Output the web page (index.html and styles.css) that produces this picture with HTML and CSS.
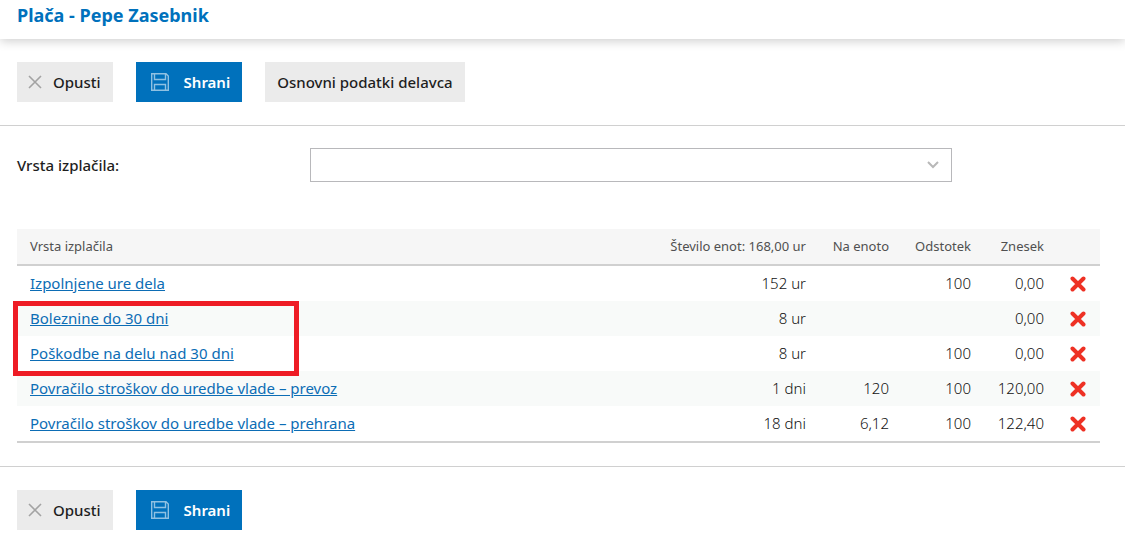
FILE: index.html
```html
<!DOCTYPE html>
<html lang="sl">
<head>
  <meta charset="UTF-8">
  <meta name="viewport" content="width=device-width, initial-scale=1.0">
  <title>Plača - Pepe Zasebnik</title>
  <link rel="stylesheet" href="styles.css">
</head>
<body>
  <!-- Shared icons -->
  <svg class="sprite" aria-hidden="true">
    <symbol id="icon-close" viewBox="0 0 14 14">
      <path d="M1 1l12 12M13 1L1 13" fill="none" stroke="currentColor" stroke-width="1.6"/>
    </symbol>
    <symbol id="icon-save" viewBox="0 0 18 18">
      <path d="M.7 .7H15L17.300 3V17.300H.7ZM3.500 .7V6.500H14.500V.7M3.500 17.300V11.500H14.500V17.300" fill="none" stroke="currentColor" stroke-width="1.400"/>
    </symbol>
    <symbol id="icon-delete" viewBox="0 0 16 16">
      <path d="M2.500 2.500l11 11M13.500 2.500l-11 11" fill="none" stroke="currentColor" stroke-width="4" stroke-linecap="round"/>
    </symbol>
  </svg>

  <header class="header">
    <h1>Plača - Pepe Zasebnik</h1>
  </header>

  <form class="form">
    <div class="toolbar">
      <button type="button" class="btn btn-cancel"><svg class="icon-close"><use href="#icon-close"/></svg>Opusti</button>
      <button type="submit" class="btn btn-primary"><svg class="icon-save"><use href="#icon-save"/></svg>Shrani</button>
      <button type="button" class="btn">Osnovni podatki delavca</button>
    </div>

    <main class="content">
      <div class="field">
        <label for="paymentType">Vrsta izplačila:</label>
        <div class="select">
          <select id="paymentType">
            <option value=""></option>
          </select>
          <svg class="arrow" viewBox="0 0 12 8" aria-hidden="true"><path d="M1 1l5 5 5-5" fill="none" stroke="currentColor" stroke-width="2"/></svg>
        </div>
      </div>

      <div class="table-wrap">
        <table>
          <thead>
            <tr>
              <th class="col-type">Vrsta izplačila</th>
              <th class="col-units">Število enot: 168,00 ur</th>
              <th class="col-rate">Na enoto</th>
              <th class="col-percent">Odstotek</th>
              <th class="col-amount">Znesek</th>
              <td class="col-delete"></td>
            </tr>
          </thead>
          <tbody>
            <tr>
              <td><a href="#">Izpolnjene ure dela</a></td>
              <td>152 ur</td>
              <td></td>
              <td>100</td>
              <td>0,00</td>
              <td><button type="button" class="delete" aria-label="Izbriši"><svg><use href="#icon-delete"/></svg></button></td>
            </tr>
            <tr>
              <td><a href="#">Boleznine do 30 dni</a></td>
              <td>8 ur</td>
              <td></td>
              <td></td>
              <td>0,00</td>
              <td><button type="button" class="delete" aria-label="Izbriši"><svg><use href="#icon-delete"/></svg></button></td>
            </tr>
            <tr>
              <td><a href="#">Poškodbe na delu nad 30 dni</a></td>
              <td>8 ur</td>
              <td></td>
              <td>100</td>
              <td>0,00</td>
              <td><button type="button" class="delete" aria-label="Izbriši"><svg><use href="#icon-delete"/></svg></button></td>
            </tr>
            <tr>
              <td><a href="#">Povračilo stroškov do uredbe vlade – prevoz</a></td>
              <td>1 dni</td>
              <td>120</td>
              <td>100</td>
              <td>120,00</td>
              <td><button type="button" class="delete" aria-label="Izbriši"><svg><use href="#icon-delete"/></svg></button></td>
            </tr>
            <tr>
              <td><a href="#">Povračilo stroškov do uredbe vlade – prehrana</a></td>
              <td>18 dni</td>
              <td>6,12</td>
              <td>100</td>
              <td>122,40</td>
              <td><button type="button" class="delete" aria-label="Izbriši"><svg><use href="#icon-delete"/></svg></button></td>
            </tr>
          </tbody>
        </table>
        <!-- Red frame around the sick leave rows -->
        <div class="highlight"></div>
      </div>
    </main>

    <div class="toolbar toolbar-bottom">
      <button type="button" class="btn btn-cancel"><svg class="icon-close"><use href="#icon-close"/></svg>Opusti</button>
      <button type="submit" class="btn btn-primary"><svg class="icon-save"><use href="#icon-save"/></svg>Shrani</button>
    </div>
  </form>
</body>
</html>
```
FILE: styles.css
```css
* {
  margin: 0;
  padding: 0;
  box-sizing: border-box;
}

body {
  font-family: 'Noto Sans', sans-serif;
  font-size: 15px;
  line-height: 20px;
  color: #1e1e1e;
  background: #ffffff;
  padding-right: 17px;
}

.sprite {
  display: none;
}

.header {
  height: 39px;
  padding: 5px 17px;
  box-shadow: 0 2px 10px rgba(0, 0, 0, 0.2);
  clip-path: inset(0 0 -14px 0);
}

h1 {
  font-size: 18px;
  line-height: 20px;
  font-weight: 700;
  color: #0071bc;
}

.toolbar {
  display: flex;
  flex-wrap: wrap;
  gap: 23px;
  padding: 23px 17px;
  border-bottom: 1px solid #d0d0d0;
}

.toolbar-bottom {
  border-top: 1px solid #d0d0d0;
  border-bottom: none;
}

.btn {
  display: flex;
  align-items: center;
  height: 40px;
  padding: 0 12px;
  border: none;
  background: #ebebeb;
  color: #1e1e1e;
  font: inherit;
  font-weight: 500;
  cursor: pointer;
}

.btn-cancel {
  padding-left: 11px;
}

.btn-primary {
  padding-left: 15px;
  background: #0071bc;
  color: #ffffff;
  font-weight: 600;
}

.icon-close {
  width: 14px;
  height: 14px;
  margin-right: 11px;
  color: #a3a3a3;
}

.icon-save {
  width: 18px;
  height: 18px;
  margin-right: 15px;
  color: #8fc1e2;
}

.content {
  padding: 22px 25px 23px 17px;
}

.field {
  display: flex;
  align-items: center;
  margin-bottom: 47px;
}

.field label {
  width: 293px;
  font-weight: 500;
}

.select {
  position: relative;
  width: 642px;
}

.select select {
  display: block;
  width: 100%;
  height: 34px;
  padding: 0 40px 0 12px;
  border: 1px solid #b8b8bb;
  background: #ffffff;
  font: inherit;
  appearance: none;
}

.arrow {
  position: absolute;
  top: 13px;
  right: 13px;
  width: 12px;
  height: 8px;
  color: #b8b8b8;
  pointer-events: none;
}

.table-wrap {
  position: relative;
}

table {
  width: 100%;
  table-layout: fixed;
  border-collapse: separate;
  border-spacing: 0;
  border-bottom: 2px solid #d0d0d0;
}

th,
td {
  height: 35px;
  padding: 0 13px 2px;
  text-align: right;
  font-weight: 300;
}

thead th,
thead td {
  height: 37px;
  background: #f6f6f6;
  border-bottom: 2px solid #d0d0d0;
  font-size: 13px;
  font-weight: 400;
  color: #505050;
}

tbody td {
  color: #111111;
}

th:first-child,
td:first-child {
  text-align: left;
}

tbody tr:nth-child(even) {
  background: #f8faf9;
}

.col-units {
  width: 180px;
}

.col-rate {
  width: 83px;
}

.col-percent {
  width: 82px;
}

.col-amount {
  width: 73px;
}

.col-delete {
  width: 43px;
}

td a {
  color: #0c6db5;
  font-weight: 450;
}

.delete {
  display: block;
  width: 16px;
  height: 16px;
  margin-top: 3px;
  border: none;
  background: none;
  color: #ee3124;
  cursor: pointer;
}

.delete svg {
  display: block;
  width: 16px;
  height: 16px;
}

.highlight {
  position: absolute;
  top: 72px;
  left: -4px;
  width: 286px;
  height: 75px;
  border: 5px solid #ee1c25;
  pointer-events: none;
}
```
